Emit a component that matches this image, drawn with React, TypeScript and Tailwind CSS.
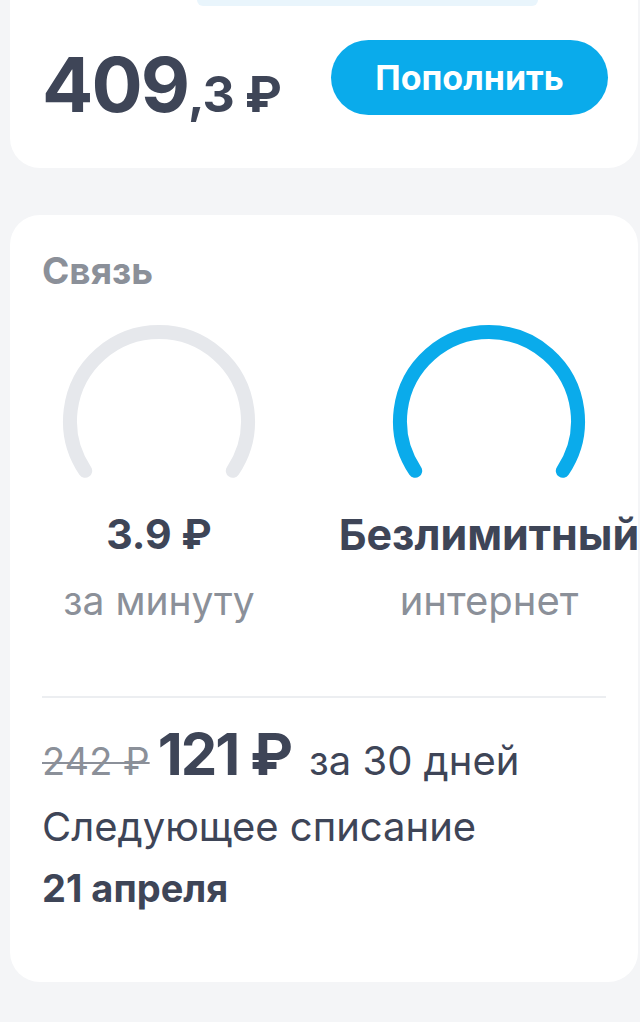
import React from "react";

const FONT = { fontFamily: "Inter, 'Noto Sans', sans-serif" };

function Gauge({ color }: { color: string }) {
  // arc opens at the bottom, ~56deg each side of vertical
  const cx = 100;
  const cy = 100;
  const r = 89;
  const dx = 73.8;
  const dy = 49.8;
  return (
    <svg width="200" height="162" viewBox="0 0 200 162" className="block">
      <path
        d={`M ${cx - dx} ${cy + dy} A ${r} ${r} 0 1 1 ${cx + dx} ${cy + dy}`}
        fill="none"
        stroke={color}
        strokeWidth="14"
        strokeLinecap="round"
      />
    </svg>
  );
}

export default function App() {
  return (
    <div className="min-h-[1022px] w-[640px] overflow-hidden bg-[#f4f5f7]" style={FONT}>
      {/* balance card */}
      <div className="ml-[10px] mr-[2px] h-[168px] rounded-b-[30px] bg-white relative">
        <div className="absolute left-[187px] top-0 h-[6px] w-[341px] rounded-b-full bg-[#e9f5fc]" />
        <div className="flex items-start justify-between pl-[32px] pr-[30px] pt-[40px]">
          <div className="mt-[6px] flex items-baseline text-[#3e4557] font-bold">
            <span className="text-[76px] leading-none tracking-[-2px]">409</span>
            <span className="text-[50px] leading-none tracking-[-1px]">,3 ₽</span>
          </div>
          <button className="h-[75px] w-[277px] rounded-full bg-[#0aabeb] text-[34px] font-bold text-white">
            Пополнить
          </button>
        </div>
      </div>

      {/* tariff card */}
      <div className="ml-[10px] mr-[2px] mt-[47px] h-[767px] rounded-[30px] bg-white px-[32px] pt-[36px]">
        <h2 className="text-[37px] leading-[40px] font-bold text-[#8b9099]">Связь</h2>

        <div className="mt-[30px] flex">
          <div className="flex w-[234px] shrink-0 flex-col items-center">
            <Gauge color="#e6e8ec" />
            <div className="mt-[27px] text-[41px] leading-[48px] font-bold text-[#3e4557]">3.9 ₽</div>
            <div className="mt-[23px] text-[39px] leading-[40px] text-[#8b9099]">за минуту</div>
          </div>
          <div className="ml-[48px] flex w-[330px] shrink-0 flex-col items-center">
            <Gauge color="#0aabeb" />
            <div className="mt-[27px] whitespace-nowrap text-[43px] leading-[48px] font-bold text-[#3e4557]">Безлимитный</div>
            <div className="mt-[23px] text-[40px] leading-[40px] text-[#8b9099]">интернет</div>
          </div>
        </div>

        <div className="mt-[75px] h-[2px] bg-[#eceef1]" />

        <div className="mt-[27px] flex items-baseline text-[#3e4557]">
          <span className="text-[38px] text-[#8b9099] line-through decoration-[2px]">242 ₽</span>
          <span className="ml-[8px] text-[58px] leading-none font-bold tracking-[-2px]">121 ₽</span>
          <span className="ml-[18px] text-[40px]">за 30 дней</span>
        </div>
        <div className="mt-[14px] text-[40px] leading-[44px] text-[#3e4557]">Следующее списание</div>
        <div className="mt-[19px] text-[38px] leading-[40px] font-bold text-[#3e4557]">21 апреля</div>
      </div>
    </div>
  );
}
